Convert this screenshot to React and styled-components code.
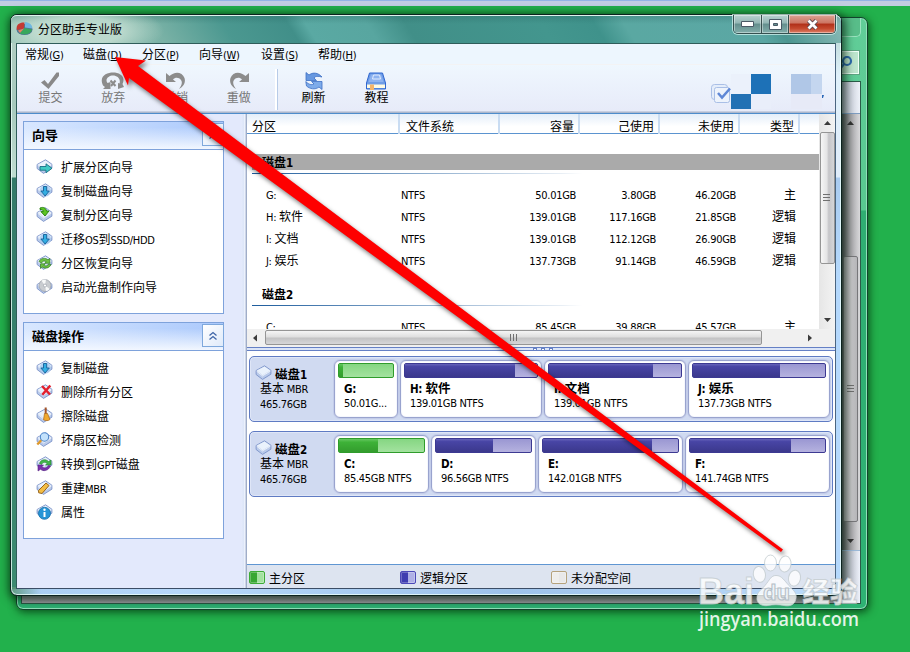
import React from 'react'
import styled, { createGlobalStyle, css } from 'styled-components'

const latin = "'DejaVu Sans Condensed', 'DejaVu Sans', 'Noto Sans CJK SC', sans-serif"
const cjk = "'Noto Sans CJK SC', 'DejaVu Sans', sans-serif"

const GlobalStyle = createGlobalStyle`
  * { box-sizing: border-box; }
  body {
    margin: 0;
    overflow: hidden;
    background: #22b14c;
    font-family: ${cjk};
    font-size: 12px;
    line-height: 16px;
    color: #000;
  }
`

const Desktop = styled.div`
  position: relative;
  width: 910px;
  height: 652px;
  overflow: hidden;
  background: #22b14c;
`
const TopStrip = styled.div`
  height: 6px;
  background: #c2cde2;
  border-top: 1px solid #93b3e4;
`

/* ---------- window behind ---------- */

const BackWindow = styled.div`
  position: absolute;
  left: 16px;
  top: 17px;
  width: 852px;
  height: 593px;
  display: flex;
  flex-direction: column;
  align-items: flex-end;
  padding: 0 6px 5px 5px;
  border: 1px solid #12432c;
  border-radius: 7px;
  background: linear-gradient(#61cd98 0, #58c890 192px, #2fae72 193px, #2eb274 100%);
  box-shadow: inset 0 0 0 1px #8fe0b8, 1px 2px 9px rgba(0, 40, 10, 0.75);
`
const BackCaption = styled.div`
  width: 60px;
  height: 19px;
  flex: none;
  border: 1px solid #9be3bf;
  border-top: 0;
  border-radius: 0 0 5px 5px;
  background: #58bd89;
`
const BackSearch = styled.div`
  width: 60px;
  height: 23px;
  flex: none;
  margin: 14px 2px 7px 0;
  padding: 4px 5px 0;
  display: flex;
  justify-content: flex-end;
  border: 1px solid #effff6;
  outline: 1px solid #5ea481;
  background: #bde5cd;
`
const BackClient = styled.div`
  width: 840px;
  flex: 1;
  min-height: 0;
  display: flex;
  flex-direction: column;
  align-items: flex-end;
  border: 1px solid #2b5b48;
  background: linear-gradient(#8d8d93, #a4a4aa);
`
const BackToolbar = styled.div`
  width: 20px;
  height: 32px;
  flex: none;
  background: linear-gradient(90deg, #a9afbd, #eef2f9);
  border-bottom: 1px solid #7d9cc0;
`
const BackScroll = styled.div`
  width: 19px;
  flex: 1;
  display: flex;
  flex-direction: column;
  align-items: center;
  background: linear-gradient(90deg, #58595e, #a5a5a8 50%, #d9d9db);
  & > svg {
    flex: none;
  }
`
const BackThumb = styled.div`
  width: 15px;
  height: 266px;
  flex: none;
  margin-top: 126px;
  display: flex;
  align-items: center;
  justify-content: center;
  border: 1px solid #77777a;
  border-radius: 2px;
  background: linear-gradient(90deg, #a9a9ab, #c6c6c8 60%, #b5b5b8);
`
const BackFoot = styled.div`
  width: 19px;
  height: 53px;
  flex: none;
  border-top: 1px solid #9cb9d8;
  background: linear-gradient(90deg, #8f949f, #eef2fb);
`

/* ---------- main window ---------- */

const Window = styled.div`
  position: absolute;
  left: 10px;
  top: 14px;
  width: 832px;
  height: 582px;
  display: flex;
  flex-direction: column;
  padding: 0 5px 6px;
  border: 1px solid #0c231f;
  border-radius: 7px;
  background:
    linear-gradient(90deg, rgba(90, 150, 120, 0.9) 0, rgba(190, 226, 240, 0) 30px) 0 100% / 100% 8px no-repeat,
    linear-gradient(#a9cfc8 0, #dff0fa 60px, #e0ecfa 162px, #a9cbf0 163px, #b4d8fc 260px) 100% 0 / 8px 574px no-repeat,
    linear-gradient(#b4cfc5 0, #a7c9bd 90px, #c0dcd2 162px, #33796a 163px, #3c8a70 100%) 0 0 / 8px 574px no-repeat,
    linear-gradient(90deg, #a8cdf2, #b6d8fa 20%, #9dc2ea 60%, #bcdcfb) 0 100% / 100% 8px no-repeat,
    #45958f;
  box-shadow: inset 0 0 0 1px rgba(235, 255, 250, 0.8), 1px 2px 10px 2px rgba(0, 25, 8, 0.75);
`
const TitleBar = styled.div`
  height: 28px;
  flex: none;
  margin: 0 -5px;
  padding: 0 5px;
  display: flex;
  align-items: flex-start;
  border-radius: 6px 6px 0 0;
  border-top: 1px solid #dff2ec;
  background:
    radial-gradient(ellipse 85px 28px at 68px 15px, rgba(205, 228, 216, 0.75) 50%, rgba(205, 228, 216, 0)),
    linear-gradient(rgba(30, 90, 85, 0.25), rgba(255, 255, 255, 0) 8px),
    linear-gradient(58deg, #9cc5b8 0, #7ab2a6 130px, #4b9890 190px, #418f89 245px, #5aa9a3 260px, #58a6a0 312px, #418f88 345px, #43968e 460px, #3f928b 505px, #5aa8a2 530px, #5ba7a4 640px, #4c9691 660px, #8dbdb9 100%);
`
const AppTitle = styled.div`
  flex: 1;
  display: flex;
  align-items: center;
  gap: 5px;
  height: 25px;
`
const CaptionButtons = styled.div`
  display: flex;
  height: 19px;
  margin-top: -1px;
  border: 1px solid #35504f;
  border-top: 0;
  border-radius: 0 0 5px 5px;
  overflow: hidden;
  box-shadow: 0 0 0 1px rgba(230, 255, 250, 0.65);
`
const CaptionButton = styled.div`
  width: ${props => (props.$close ? 47 : 27)}px;
  display: flex;
  align-items: center;
  justify-content: center;
  border-left: ${props => (props.$first ? '0' : '1px solid #38504f')};
  box-shadow: inset 0 0 0 1px rgba(255, 255, 255, 0.4);
  background: ${props =>
    props.$close
      ? 'linear-gradient(#dba394 0, #cc7461 45%, #b02f18 50%, #c4492e 75%, #dd8168 100%)'
      : 'linear-gradient(#b9d2d0 0, #93b6b4 45%, #648f8d 50%, #82aeab 100%)'};
`
const Client = styled.div`
  flex: 1;
  min-height: 0;
  display: flex;
  flex-direction: column;
  border: 1px solid #2f5d5a;
  border-right-color: #4b6580;
  border-bottom-color: #3b4d66;
  background: #e3e9fc;
`
const MenuBar = styled.div`
  height: 20px;
  flex: none;
  display: flex;
  padding: 2px 0 0 8px;
  background: #edf6fe;
`
const MenuItem = styled.div`
  width: ${props => props.$width}px;
  white-space: nowrap;
`
const ToolBar = styled.div`
  height: 50px;
  flex: none;
  display: flex;
  padding-left: 2px;
  border-top: 1px solid #f3f3f4;
  border-bottom: 1px solid #4d8ccb;
  background: linear-gradient(#eff7fe 0, #e7ebf9 46px, #a9b3c8 47px, #b4c4dc 49px);
`
const Tool = styled.div`
  width: 62.8px;
  padding-top: 7px;
  display: flex;
  flex-direction: column;
  align-items: center;
  color: ${props => (props.$disabled ? '#777' : '#000')};
  & > svg {
    flex: none;
    height: 18px;
    margin-bottom: -1px;
  }
`
const ToolDivider = styled.div`
  width: 3px;
  height: 41px;
  margin: 4px 4px 0 5px;
  background: linear-gradient(90deg, #fff 0 2px, #b7cbe8 2px);
`
const Account = styled.div`
  flex: 1;
  display: flex;
  justify-content: flex-end;
  padding: 9px 11px 0 0;
`
const Mosaic = styled.div`
  display: grid;
  grid-template-columns: 20px 20px 20px 20px 11px;
  grid-template-rows: 20px 15px;
`
const MosaicCell = styled.div`
  background: ${props => props.$color};
`

const Body = styled.div`
  flex: 1;
  min-height: 0;
  display: flex;
`
const Sidebar = styled.div`
  width: 224px;
  flex: none;
  padding: 7px 0 0 6px;
  background: #e3e9fc;
`
const Splitter = styled.div`
  width: 6px;
  flex: none;
  background: linear-gradient(90deg, #e5ebfc, #dde6f8 45%, #eef3fd 60%, #b6c1d8 85%, #8595b5);
`
const Panel = styled.div`
  width: 201px;
  height: ${props => props.$height}px;
  margin-bottom: 8px;
  border: 1px solid #7ea2db;
  background: #fff;
`
const PanelHeader = styled.div`
  height: 28px;
  display: flex;
  justify-content: space-between;
  border-bottom: 1px solid #7ea2db;
  background: linear-gradient(rgba(255, 255, 255, 0) 0, rgba(255, 255, 255, 0) 20%, #f2f7ff 100%),
    linear-gradient(90deg, #d8e7ff, #abc9fc);
`
const PanelTitle = styled.div`
  padding: 5px 0 0 8px;
  font-size: 13px;
  font-weight: 700;
`
const PanelToggle = styled.div`
  width: 22px;
  height: 23px;
  margin: 1px -1px 0 0;
  display: flex;
  align-items: center;
  justify-content: center;
  border: 1px solid #7ea8dc;
  background: linear-gradient(135deg, #fff, #dfeafa);
`
const PanelItem = styled.div`
  height: 24px;
  display: flex;
  align-items: center;
  gap: 8.500px;
  padding-left: 11.500px;
  white-space: nowrap;
`
const PanelItems = styled.div`
  padding-top: 5px;
`

const Content = styled.div`
  flex: 1;
  min-width: 0;
  display: flex;
  flex-direction: column;
  background: #fff;
`
const TableArea = styled.div`
  height: 215px;
  flex: none;
  display: flex;
`
const TableMain = styled.div`
  width: 572px;
  display: flex;
  flex-direction: column;
`
const columns = css`
  display: grid;
  grid-template-columns: 153px 100px 80px 80px 80px 60px 1fr;
`
const TableHead = styled.div`
  ${columns}
  height: 20px;
  border-bottom: 1px solid #5b94d0;
  background: linear-gradient(#e4eef9, #fff 65%);
`
const HeadCell = styled.div`
  padding: ${props => (props.$right ? '4px 4px 0 0' : '4px 0 0 6px')};
  text-align: ${props => (props.$right ? 'right' : 'left')};
  line-height: 16px;
  border-right: ${props => (props.$last ? '0' : '2px solid #c9dcf2')};
  &:first-child {
    padding-left: 5px;
  }
`
const TableBody = styled.div`
  height: 195px;
  overflow: hidden;
  padding-top: 20px;
`
const GroupTitle = styled.div`
  height: 16px;
  margin-left: 5px;
  padding-left: 10px;
  font-weight: 700;
  background: ${props => (props.$selected ? '#aaaaaa' : 'transparent')};
`
const GroupLine = styled.div`
  height: 1px;
  margin: 3px 0 10px 5px;
  background: linear-gradient(90deg, #1d5c9d, rgba(29, 92, 157, 0.1) 310px, transparent 330px);
`
const Group = styled.div`
  margin-bottom: 14px;
`
const Row = styled.div`
  ${columns}
  height: 22px;
  line-height: 20px;
`
const Cell = styled.div`
  text-align: ${props => (props.$right ? 'right' : 'left')};
  padding: ${props => (props.$right ? '0 4px 0 0' : '0 0 0 1px')};
  white-space: nowrap;
  &:first-child {
    padding-left: 19px;
  }
`
const VScroll = styled.div`
  width: 16px;
  height: 216px;
  padding-top: 6px;
  display: flex;
  flex-direction: column;
  align-items: center;
  background: linear-gradient(90deg, #e6e6e6, #f3f3f3);
  & > svg {
    flex: none;
  }
`
const Thumb = styled.div`
  flex: none;
  display: flex;
  align-items: center;
  justify-content: center;
  border: 1px solid #959595;
  border-radius: 2px;
  ${props =>
    props.$vertical
      ? 'width: 15px; height: 132px; margin: 6px 0 53px; background: linear-gradient(90deg, #f6f6f6, #e4e4e5 45%, #c5c5c8 60%, #d5d5d8);'
      : 'width: 497px; height: 15px; margin: 0 45px 0 6px; background: linear-gradient(#f5f5f5, #dfdfdf 45%, #c3c3c4 55%, #d6d6d8);'}
`
const HScroll = styled.div`
  height: 18px;
  flex: none;
  display: flex;
  align-items: center;
  padding: 0 0 1px 5px;
  background: #f0f0f0;
`
const SplitHandle = styled.div`
  height: 4px;
  flex: none;
  display: flex;
  justify-content: center;
  align-items: flex-start;
  gap: 4px;
  padding-left: 4px;
  border-top: 1px solid #6580c5;
  border-bottom: 1px solid #6580c5;
  background: #dbe5f8;
`
const Dot = styled.i`
  width: 4px;
  height: 3px;
  border: 1px solid #6580c5;
  background: #fff;
`
const Disks = styled.div`
  flex: 1;
  padding: 5px 0 0 2px;
  display: flex;
  flex-direction: column;
  gap: 9px;
`
const DiskCard = styled.div`
  width: 584px;
  height: 66px;
  display: flex;
  padding: 3px 2px 3px 5px;
  border: 1px solid #5f7bc3;
  border-radius: 5px;
  background: #d0daf1;
  box-shadow: inset 0 0 0 1px #dfe6f7;
`
const DiskInfo = styled.div`
  width: 79px;
  flex: none;
  padding-left: 5px;
  line-height: 15px;
`
const DiskName = styled.div`
  display: flex;
  align-items: center;
  gap: 3px;
  height: 20px;
  margin: 3px 0 -3px -5px;
  font-size: 12.5px;
  font-weight: 700;
  & > svg {
    flex: none;
  }
`
const Partitions = styled.div`
  flex: 1;
  display: flex;
  gap: 2px;
`
const Partition = styled.div`
  width: ${props => props.$width}px;
  height: 58px;
  padding: 3px;
  border: 1px solid #99a3ce;
  border-radius: 6px;
  background: #fff;
  box-shadow: inset 0 0 0 1px #f5f7fd, 0 0 0 1px #c3cce9;
`
const Usage = styled.div`
  height: 15px;
  margin: -1px 0 2px;
  border: 1px solid ${props => (props.$primary ? '#2f9c2c' : '#3c3992')};
  border-radius: 2px;
  background: ${props =>
    props.$primary ? 'linear-gradient(#85d682, #a3e29f)' : 'linear-gradient(#9a97d2, #b5b2df)'};
`
const Used = styled.div`
  height: 100%;
  background: ${props =>
    props.$primary
      ? 'linear-gradient(#65c760, #3eb238 25%, #339c2d)'
      : 'linear-gradient(#6663b9, #4845a5 20%, #3b388c)'};
`
const PartName = styled.div`
  padding-left: 6px;
  font-size: 12.5px;
  font-weight: 700;
  line-height: 15px;
  white-space: nowrap;
`
const PartSize = styled.div`
  padding-left: 6px;
  line-height: 14px;
  white-space: nowrap;
`
const Legend = styled.div`
  height: 24px;
  flex: none;
  display: flex;
  padding: 5px 0 0 2px;
  border-top: 1px solid #5f96d2;
  background: #dde4f0;
`
const LegendItem = styled.div`
  width: 151px;
  display: flex;
  gap: 4px;
`
const Swatch = styled.i`
  width: 16px;
  height: 13px;
  margin-top: 1px;
  border: 1px solid ${props => props.$border};
  border-radius: 2px;
  box-shadow: inset 0 0 0 1px rgba(255, 255, 255, 0.25);
  background: linear-gradient(90deg, ${props => props.$from} 50%, ${props => props.$to} 50%);
`

const Latin = styled.span`
  font-family: ${latin};
  font-size: ${props => (props.$bold ? 11.5 : 11)}px;
  line-height: 0;
  letter-spacing: -0.3px;
`
const Overlay = styled.svg`
  position: absolute;
  left: 0;
  top: 0;
  pointer-events: none;
`

/* latin runs are set smaller than the chinese ones */
const Label = ({ text, bold }) =>
  text.split(/([\x20-\x7e]+)/).map((part, i) =>
    i % 2 ? (
      <Latin key={i} $bold={bold}>
        {part}
      </Latin>
    ) : (
      part
    )
  )

/* ---------- icons ---------- */

const DiskBase = () => (
  <>
    <path d="M.6 5.5 9 .8 15.4 5.2V9.2L7 14.4.6 9.5z" fill="#b9caea" stroke="#7c93c8" strokeWidth="0.9" />
    <path d="M1.3 5.6 9 1.4 14.8 5.4 7 10.2z" fill="#eaf2fc" />
    <path d="M1.2 6.2 7 10.9 15 6" fill="none" stroke="#fff" strokeWidth="0.7" />
  </>
)

const overlays = {
  extend: <path d="M3.5 7.5h6V4.8l6 4.5-6 4.5V11.2h-6z" fill="#3fc9c4" stroke="#1a6d86" strokeWidth="0.9" />,
  down: (
    <>
      <circle cx="8.8" cy="8" r="5.6" fill="#a9cdf0" opacity="0.85" />
      <path d="M7 3.5h3.2V8h2.6L8.6 13 4.4 8H7z" fill="#33aee2" stroke="#145f98" strokeWidth="0.9" />
    </>
  ),
  partition: (
    <path
      d="M3.5 1C7-.5 9.5 1 10 4h2.5L8.5 9 4.4 4.600H6.800C6.500 3 5.600 2.300 3.500 2.500z"
      fill="#5cc423"
      stroke="#237a11"
      strokeWidth="0.9"
    />
  ),
  recover: (
    <path
      d="M2.5 6.5C4 3 9 2.5 11.5 4.8l1.800-1.300v4.800H8.200L9.800 6.800C8 5.400 6 6 5 8zM14.500 9.500c-1.500 4-6.500 4.500-9 2.300L4 13.500V8.800h4.800L7.200 10.300c1.800 1.300 4 .7 5-1.300z"
      fill="#6dc043"
      stroke="#2f7d23"
      strokeWidth="0.7"
    />
  ),
  disc: (
    <>
      <circle cx="8.5" cy="6.5" r="6" fill="#c9ccd0" stroke="#8d949e" strokeWidth="0.6" />
      <path d="M8.5 6.5 5 1.8A6 6 0 0 1 9.5.6zM8.5 6.5l4.800 3.600A6 6 0 0 1 9.500 12.300z" fill="#f8f9f9" />
      <circle cx="8.5" cy="6.5" r="1.5" fill="#fff" stroke="#8d949e" strokeWidth="0.6" />
    </>
  ),
  remove: <path d="M5.5 2 13.5 10.5M13.8 1.5 5.8 10.8" stroke="#e3202e" strokeWidth="2.5" />,
  wipe: (
    <>
      <path d="M9.2 -.5v6.5" stroke="#a4552a" strokeWidth="2" />
      <path d="M8 5.5h3l2.5 6c-2 1.5-4 1.5-6.5.3z" fill="#f0a82d" stroke="#a8661b" strokeWidth="0.7" />
    </>
  ),
  check: (
    <>
      <path d="M.8 12.5 5 8" stroke="#e0992a" strokeWidth="2.4" />
      <circle cx="8" cy="5" r="4.2" fill="#c2e1fb" stroke="#4f86c9" strokeWidth="1.1" />
    </>
  ),
  gpt: (
    <>
      <path d="M3 7.5C4 3.5 9 2.5 12 5.5L14.5 4v5H9l1.7-1.5C8.5 5.7 6.5 6 5 8.5z" fill="#42b64a" stroke="#247b31" strokeWidth="0.6" />
      <path d="M14 10c-2 4.8-7 5.8-10 3.3L1.5 15V9h5.5l-1.6 1.7C8 12.8 10.5 12 12 9.5z" fill="#7b31ad" stroke="#552080" strokeWidth="0.6" />
    </>
  ),
  mbr: <path d="M2 10.5 9.5 3 12.5 5.5 5.5 13.5 2.2 12.8z" fill="#f3bd45" stroke="#99651c" strokeWidth="1" />,
  info: (
    <>
      <circle cx="8" cy="9.3" r="6" fill="#2695d6" stroke="#136da8" strokeWidth="0.8" />
      <path d="M8 8v5" stroke="#fff" strokeWidth="2" />
      <circle cx="8" cy="5.8" r="1.2" fill="#fff" />
    </>
  )
}

const DiskIcon = ({ kind }) => (
  <svg width="17" height="16" viewBox="0 0 16 16" overflow="visible">
    <DiskBase />
    {overlays[kind]}
  </svg>
)

const AppIcon = () => (
  <svg width="17" height="15" viewBox="0 0 17 15">
    <ellipse cx="8.5" cy="8.5" rx="8" ry="5.5" fill="#4f7894" />
    <path d="M8 7.5 1 9C-.5 4.5 3 1 8.5 1.5z" fill="#c43a33" />
    <path d="M9 6.5V1c4.5.3 7.5 3 7.3 6.5z" fill="#6fb7df" />
    <path d="M8.5 7 16 8.5c-1 4.5-8 6.5-12.5 3.5z" fill="#38a75d" />
    <path d="M2 9.5 8 7.5 4 12z" fill="#e98065" />
  </svg>
)

const toolIcons = {
  submit: (
    <svg width="20" height="18">
      <path d="M1 10.5 4.5 8 8 12 16.5.5 19 .5V4L8.5 17z" fill="#898989" />
    </svg>
  ),
  discard: (
    <svg width="24" height="18">
      <path
        d="M2 13.5C-2.5 4 6 .5 12 .5c7 0 13 4 9.5 11.5L23 15l-6 2v-6l1.500.5C20 6.500 16 3.500 12 3.500S3.500 7 6.500 11l3-1v7H2l2-2z"
        fill="#8c8c8c"
      />
      <path d="m9.5 8.5 5 5.5M14.5 8.5 10 14" stroke="#8c8c8c" strokeWidth="2" />
    </svg>
  ),
  undo: (
    <svg width="20" height="18">
      <path d="M0 1 3.5 4C8-.5 16-1 18.5 6c1.5 5-1.5 9-5.5 11 2-3 4-6 2-9-2-3-6-3-8-.5L10 10H0z" fill="#8c8c8c" />
    </svg>
  ),
  redo: (
    <svg width="20" height="18">
      <path d="M20 1 16.5 4C12-.5 4-1 1.5 6 0 11 3 15 7 17 5 14 3 11 5 8c2-3 6-3 8-.5L10 10h10z" fill="#8c8c8c" />
    </svg>
  ),
  refresh: (
    <svg width="18" height="18">
      <path d="M1 .5 4 3c4-3 9-2.5 13 2-4-1-7-1-8 1l2.5 2.5H1z" fill="#6798e0" stroke="#3c6fc4" strokeWidth="0.8" />
      <path d="M17 17.5 14 15c-4 3-9 2-12.5-1L.8 9.5C4 13 7 13 9 12L6.5 9.5H17z" fill="#7eabea" stroke="#3c6fc4" strokeWidth="0.8" />
    </svg>
  ),
  book: (
    <svg width="20" height="18">
      <path d="M3.5 1h13l3 10v6h-19v-6z" fill="#6f9de6" stroke="#2f66cf" />
      <path d="M5 2.5h10l2.5 7.5H2.5z" fill="#8eb3f0" />
      <path d="M7.5 3h6l1 4h-8z" fill="none" stroke="#e1ecff" />
      <path d="M1 12.5h18V16H1z" fill="#fffbe3" />
      <path d="M4 12.5h4V18H4z" fill="#f4b56b" />
    </svg>
  )
}

const Chevrons = () => (
  <svg width="10" height="10" fill="none" stroke="#3f66a8" strokeWidth="1.3">
    <path d="M1.5 4.5 5 1.5 8.5 4.5M1.5 8.5 5 5.5 8.5 8.5" />
  </svg>
)

const arrowPaths = {
  up: 'M0 5 3.5 1 7 5z',
  down: 'M0 1H7L3.5 5z',
  left: 'M5 -.5V6.5L1 3z',
  right: 'M1 -.5V6.5L5 3z'
}
const ScrollArrow = ({ dir }) => (
  <svg width="7" height="6" overflow="visible">
    <path d={arrowPaths[dir]} fill="#3b3b3b" />
  </svg>
)

const Grip = ({ turned }) => (
  <svg width="8" height="8" stroke="#707070">
    {turned ? <path d="M.5 0v7M3.5 0v7M6.5 0v7" /> : <path d="M0 .5h7M0 3.5h7M0 6.5h7" />}
  </svg>
)

/* ---------- data ---------- */

const menus = [
  ['常规', 'G', 58],
  ['磁盘', 'D', 59],
  ['分区', 'P', 57],
  ['向导', 'W', 62],
  ['设置', 'S', 57],
  ['帮助', 'H', 50]
]
const wizards = [
  ['extend', '扩展分区向导'],
  ['down', '复制磁盘向导'],
  ['partition', '复制分区向导'],
  ['down', '迁移OS到SSD/HDD'],
  ['recover', '分区恢复向导'],
  ['disc', '启动光盘制作向导']
]
const operations = [
  ['down', '复制磁盘'],
  ['remove', '删除所有分区'],
  ['wipe', '擦除磁盘'],
  ['check', '坏扇区检测'],
  ['gpt', '转换到GPT磁盘'],
  ['mbr', '重建MBR'],
  ['info', '属性']
]
const groups = [
  {
    name: '磁盘1',
    selected: true,
    rows: [
      ['G:', 'NTFS', '50.01GB', '3.80GB', '46.20GB', '主'],
      ['H: 软件', 'NTFS', '139.01GB', '117.16GB', '21.85GB', '逻辑'],
      ['I: 文档', 'NTFS', '139.01GB', '112.12GB', '26.90GB', '逻辑'],
      ['J: 娱乐', 'NTFS', '137.73GB', '91.14GB', '46.59GB', '逻辑']
    ]
  },
  { name: '磁盘2', rows: [['C:', 'NTFS', '85.45GB', '39.88GB', '45.57GB', '主']] }
]
const disks = [
  {
    name: '磁盘1',
    parts: [
      { name: 'G:', size: '50.01G...', width: 64, used: 8, primary: true },
      { name: 'H: 软件', size: '139.01GB NTFS', width: 142, used: 83 },
      { name: 'I: 文档', size: '139.01GB NTFS', width: 142, used: 79 },
      { name: 'J: 娱乐', size: '137.73GB NTFS', width: 142, used: 66 }
    ]
  },
  {
    name: '磁盘2',
    parts: [
      { name: 'C:', size: '85.45GB NTFS', width: 95, used: 46, primary: true },
      { name: 'D:', size: '96.56GB NTFS', width: 105, used: 60 },
      { name: 'E:', size: '142.01GB NTFS', width: 145, used: 81 },
      { name: 'F:', size: '141.74GB NTFS', width: 145, used: 75 }
    ]
  }
]

const SidePanel = ({ title, items, height }) => (
  <Panel $height={height}>
    <PanelHeader>
      <PanelTitle>{title}</PanelTitle>
      <PanelToggle>
        <Chevrons />
      </PanelToggle>
    </PanelHeader>
    <PanelItems>
      {items.map(([icon, text]) => (
        <PanelItem key={text}>
          <DiskIcon kind={icon} />
          <span>
            <Label text={text} />
          </span>
        </PanelItem>
      ))}
    </PanelItems>
  </Panel>
)

const PartitionTable = () => (
  <TableArea>
    <TableMain>
      <TableHead>
        <HeadCell>分区</HeadCell>
        <HeadCell>文件系统</HeadCell>
        <HeadCell $right>容量</HeadCell>
        <HeadCell $right>己使用</HeadCell>
        <HeadCell $right>未使用</HeadCell>
        <HeadCell $right>类型</HeadCell>
        <HeadCell $last />
      </TableHead>
      <TableBody>
        {groups.map(group => (
          <Group key={group.name}>
            <GroupTitle $selected={group.selected}>
              <Label text={group.name} bold />
            </GroupTitle>
            <GroupLine />
            {group.rows.map(row => (
              <Row key={row[0]}>
                {row.map((value, i) => (
                  <Cell key={i} $right={i > 1}>
                    <Label text={value} />
                  </Cell>
                ))}
              </Row>
            ))}
          </Group>
        ))}
      </TableBody>
    </TableMain>
    <VScroll>
      <ScrollArrow dir="up" />
      <Thumb $vertical>
        <Grip />
      </Thumb>
      <ScrollArrow dir="down" />
    </VScroll>
  </TableArea>
)

const DiskMap = () => (
  <Disks>
    {disks.map(disk => (
      <DiskCard key={disk.name}>
        <DiskInfo>
          <DiskName>
            <DiskIcon />
            <span>
              <Label text={disk.name} bold />
            </span>
          </DiskName>
          <div>
            <Label text="基本 MBR" />
          </div>
          <div>
            <Label text="465.76GB" />
          </div>
        </DiskInfo>
        <Partitions>
          {disk.parts.map(part => (
            <Partition key={part.name} $width={part.width}>
              <Usage $primary={part.primary}>
                <Used $primary={part.primary} style={{ width: `${part.used}%` }} />
              </Usage>
              <PartName>
                <Label text={part.name} bold />
              </PartName>
              <PartSize>
                <Label text={part.size} />
              </PartSize>
            </Partition>
          ))}
        </Partitions>
      </DiskCard>
    ))}
  </Disks>
)

const Pointer = () => (
  <Overlay width="910" height="652" style={{ filter: 'drop-shadow(2px 3px 2px rgba(0,0,0,.5))' }}>
    <path d="M115 57 146 60.5 138 66 783 549.5 781 552 129 78 128 85.5z" fill="#fe0000" />
  </Overlay>
)

const Watermark = () => (
  <Overlay width="910" height="652">
    <g fill="#fff" stroke="#bfc8cc" strokeWidth="1" fillOpacity="0.78" strokeOpacity="0.75">
      <ellipse cx="770.5" cy="563" rx="6" ry="8" />
      <ellipse cx="785" cy="564" rx="6" ry="8" transform="rotate(8 785 564)" />
      <ellipse cx="759.5" cy="574.5" rx="6" ry="8" transform="rotate(-10 759 575)" />
      <ellipse cx="794.5" cy="578" rx="6" ry="8" transform="rotate(10 794 578)" />
      <path d="M776 575.5c6 0 8 5 13 10 5 6 8 7 7 13-1 7-7 8-12 7-5-1-11-1-16 0-6 1-12-2-11-8 0-6 4-7 8-12 5-6 6-10 11-10z" />
      <text x="698" y="604" fontFamily="'Liberation Sans', sans-serif" fontWeight="700" fontSize="36" textLength="56">
        Bai
      </text>
      <text x="802.5" y="602" fontFamily="'Noto Sans CJK SC', sans-serif" fontWeight="900" fontSize="27" textLength="55">
        经验
      </text>
    </g>
    <text
      x="763"
      y="600"
      fill="#eef2f6"
      stroke="#b3bdc6"
      strokeWidth="1"
      fontFamily="'Liberation Sans', sans-serif"
      fontWeight="700"
      fontSize="22"
      textLength="27"
    >
      du
    </text>
    <text
      x="699"
      y="626"
      fill="#fff"
      fillOpacity="0.88"
      fontFamily="'Open Sans', sans-serif"
      fontWeight="600"
      fontSize="19"
      textLength="160"
      lengthAdjust="spacingAndGlyphs"
    >
      jingyan.baidu.com
    </text>
  </Overlay>
)

const App = () => (
  <Desktop>
    <GlobalStyle />
    <TopStrip />
    <BackWindow>
      <BackCaption />
      <BackSearch>
        <svg width="14" height="14" fill="none" stroke="#2f6cae" strokeWidth="2.2">
          <circle cx="8" cy="5" r="4" />
          <path d="M5 8 1 13" />
        </svg>
      </BackSearch>
      <BackClient>
        <BackToolbar />
        <BackScroll>
          <svg width="9" height="16">
            <path d="M1 11 4.5 7 8 11z" fill="#333" />
          </svg>
          <BackThumb>
            <Grip />
          </BackThumb>
          <svg width="9" height="28">
            <path d="M1 17H8L4.5 21z" fill="#333" />
          </svg>
        </BackScroll>
        <BackFoot />
      </BackClient>
    </BackWindow>

    <Window>
      <TitleBar>
        <AppTitle>
          <AppIcon />
          <span>分区助手专业版</span>
        </AppTitle>
        <CaptionButtons>
          <CaptionButton $first>
            <svg width="13" height="6">
              <path d="M.5.5h12v5H.5z" fill="#fff" stroke="#4a5a66" />
            </svg>
          </CaptionButton>
          <CaptionButton>
            <svg width="13" height="11">
              <path d="M.5.5h12v10H.5zM4.5 4.5v2h4v-2z" fill="#fff" fillRule="evenodd" stroke="#4a5a66" />
            </svg>
          </CaptionButton>
          <CaptionButton $close>
            <svg width="13" height="11">
              <path d="M2.5 1.5 10.5 9.5M10.5 1.5 2.5 9.5" stroke="#5a4650" strokeWidth="4.5" />
              <path d="M2.5 1.5 10.5 9.5M10.5 1.5 2.5 9.5" stroke="#fff" strokeWidth="2.8" />
            </svg>
          </CaptionButton>
        </CaptionButtons>
      </TitleBar>
      <Client>
        <MenuBar>
          {menus.map(([name, key, width]) => (
            <MenuItem key={key} $width={width}>
              {name}
              <Latin>
                (<u>{key}</u>)
              </Latin>
            </MenuItem>
          ))}
        </MenuBar>
        <ToolBar>
          <Tool $disabled>{toolIcons.submit}提交</Tool>
          <Tool $disabled>{toolIcons.discard}放弃</Tool>
          <Tool $disabled>{toolIcons.undo}撤销</Tool>
          <Tool $disabled>{toolIcons.redo}重做</Tool>
          <ToolDivider />
          <Tool>{toolIcons.refresh}刷新</Tool>
          <Tool>{toolIcons.book}教程</Tool>
          <Account>
            <svg width="20" height="30" fill="none">
              <rect x=".5" y="10.5" width="16" height="15" rx="3" fill="#e4edfa" stroke="#a9bfe6" />
              <rect x="3.5" y="13.5" width="15" height="15" rx="2" fill="#edf3fc" stroke="#a9bfe6" />
              <path d="m7 19 4 4.5 8-9" stroke="#5f88d6" strokeWidth="2.5" />
            </svg>
            <Mosaic>
              <MosaicCell $color="#ebf1fb" />
              <MosaicCell $color="#1d71b7" />
              <MosaicCell $color="transparent" />
              <MosaicCell $color="#b0c7e7" />
              <MosaicCell $color="#c4d6ef" />
              <MosaicCell $color="#2271b4" />
              <MosaicCell $color="#e9eefa" />
              <MosaicCell $color="transparent" />
              <MosaicCell $color="#e7eaf7" />
              <MosaicCell $color="#e7eaf7" />
            </Mosaic>
            <svg width="2" height="24">
              <path d="M0 21h2l-1 3H0z" fill="#2a68b8" />
            </svg>
          </Account>
        </ToolBar>
        <Body>
          <Sidebar>
            <SidePanel title="向导" items={wizards} height={193} />
            <SidePanel title="磁盘操作" items={operations} height={217} />
          </Sidebar>
          <Splitter />
          <Content>
            <PartitionTable />
            <HScroll>
              <ScrollArrow dir="left" />
              <Thumb>
                <Grip turned />
              </Thumb>
              <ScrollArrow dir="right" />
            </HScroll>
            <SplitHandle>
              <Dot />
              <Dot />
              <Dot />
            </SplitHandle>
            <DiskMap />
            <Legend>
              <LegendItem>
                <Swatch $border="#3cab35" $from="#38a732" $to="#a3e29f" />
                主分区
              </LegendItem>
              <LegendItem>
                <Swatch $border="#4a48b8" $from="#3f3db0" $to="#aeb0e6" />
                逻辑分区
              </LegendItem>
              <LegendItem>
                <Swatch $border="#b5a27c" $from="#eeeeec" $to="#e8e8e8" />
                未分配空间
              </LegendItem>
            </Legend>
          </Content>
        </Body>
      </Client>
    </Window>
    <Pointer />
    <Watermark />
  </Desktop>
)

export default App
